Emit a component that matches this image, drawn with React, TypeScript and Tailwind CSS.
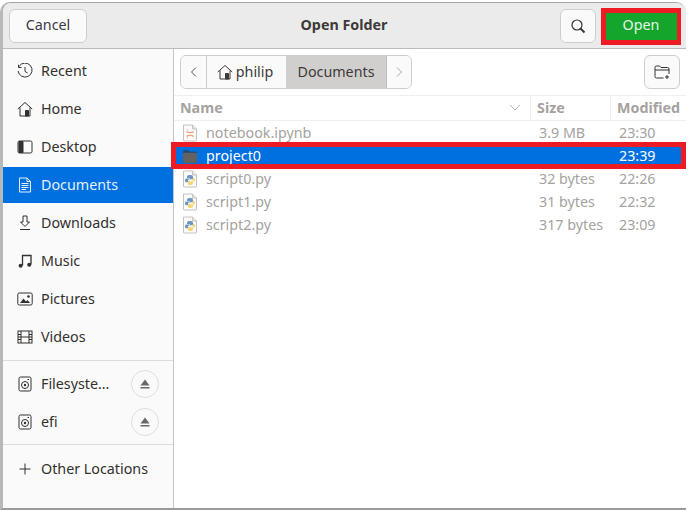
import React from "react";

const S = ({ children, size = 16, className = "" }: { children: React.ReactNode; size?: number; className?: string }) => (
  <svg width={size} height={size} viewBox="0 0 16 16" fill="none" stroke="currentColor" strokeWidth="1" className={"shrink-0 " + className}>
    {children}
  </svg>
);

const Recent = () => (
  <S>
    <path d="M2.2 3.2A7 7 0 1 1 1.1 8" />
    <path d="M1.5 1.8V4.5H4.5" />
    <path d="M8 4v4.4l2.6 1.6" />
  </S>
);
const Home = () => (
  <S>
    <path d="M0.8 8 8 1.5 15.2 8" />
    <path d="M3 6.5V15H13V6.5" />
    <path d="M8.5 9.5h3V15h-3z" fill="currentColor" />
  </S>
);
const Desktop = () => (
  <S>
    <rect x="1" y="2" width="14" height="12" rx="1.5" />
    <path d="M2 2.5h4v11H2z" fill="currentColor" />
  </S>
);
const Doc = () => (
  <S>
    <path d="M2.5 1h7.5l3.5 3.5V15h-11z" strokeLinejoin="round" />
    <path d="M10 1v3.5h3.5M4.5 6.5h7M4.5 8.5h7M4.5 10.5h7M4.5 12.5h4.5" />
  </S>
);
const Download = () => (
  <S>
    <path d="M6 1h4v6h2.5L8 11.5 3.5 7H6z" />
    <path d="M3 14.5h10" />
  </S>
);
const Music = () => (
  <S>
    <path d="M5.5 12.5V2.5h8.5v9" strokeWidth="1.3" />
    <circle cx="3.6" cy="12.8" r="2" fill="currentColor" stroke="none" />
    <circle cx="12.2" cy="11.8" r="2" fill="currentColor" stroke="none" />
  </S>
);
const Pictures = () => (
  <S>
    <rect x="0.8" y="2" width="14.4" height="12" rx="1.5" />
    <path d="M3 12l3.5-4.5 2.5 3 1.5-1.5 2.5 3z" fill="currentColor" stroke="none" />
    <circle cx="11.5" cy="5.5" r="1.3" fill="currentColor" stroke="none" />
  </S>
);
const Video = () => (
  <S>
    <rect x="1" y="2" width="14" height="12" />
    <path d="M4 2v12M12 2v12M1 5.5h3M1 8h3M1 10.5h3M12 5.5h3M12 8h3M12 10.5h3M4 8h8" />
  </S>
);
const Disk = () => (
  <S>
    <rect x="2" y="1" width="12" height="14" rx="1.5" />
    <circle cx="8" cy="9" r="3.5" />
    <circle cx="8" cy="9" r="1.2" fill="currentColor" stroke="none" />
    <path d="M10.5 3.5h1.5" />
  </S>
);
const Plus = () => (
  <S>
    <path d="M8 2.5v11M2.5 8h11" />
  </S>
);

const PageIcon = ({ children }: { children: React.ReactNode }) => (
  <svg width="16" height="18" viewBox="0 0 16 18" className="shrink-0">
    <path d="M1.5 1h9l4 4v11.5a.5.5 0 0 1-.5.5H2a.5.5 0 0 1-.5-.5z" fill="#fbfbfb" stroke="#c4c2bf" />
    <path d="M10.5 1v4h4" fill="#e8e6e3" stroke="#c4c2bf" />
    {children}
  </svg>
);
const Py = () => (
  <PageIcon>
    <path d="M8 5c-2 0-3 .6-3 2v1h3v.6H4.400C3.400 8.600 3 9.400 3 10.500s.5 1.800 1.500 1.800H6v-1.300c0-1 .8-1.700 1.800-1.700h2c.8 0 1.200-.5 1.200-1.300V7c0-1.400-1.200-2-3-2z" fill="#6d97c0" />
    <path d="M8 15c2 0 3-.6 3-2v-1H8v-.6h3.600c1 0 1.400-.8 1.400-1.900s-.5-1.800-1.500-1.800H11v1.300c0 1-.8 1.700-1.800 1.700h-2C6.400 10.700 6 11.200 6 12v1c0 1.400.2 2 2 2z" fill="#f3d674" />
  </PageIcon>
);
const Ipynb = () => (
  <PageIcon>
    <path d="M4.500 7.500c1.200 1.500 5.800 1.500 7 0M4.500 12.500c1.200-1.500 5.800-1.500 7 0" stroke="#f0a27c" strokeWidth="1.400" fill="none" />
    <path d="M5 5.800h1M5 14h1" stroke="#f0a27c" />
  </PageIcon>
);
const Folder = () => (
  <svg width="16" height="16" viewBox="0 0 16 16" className="shrink-0">
    <path d="M1 3.500A1.500 1.500 0 0 1 2.500 2h3.500l1.500 1.500H13.500A1.500 1.500 0 0 1 15 5v8.500a1.500 1.500 0 0 1-1.500 1.500h-11A1.500 1.500 0 0 1 1 13.500z" fill="#1f4a78" />
    <path d="M1 5.800a1 1 0 0 1 1-1h12a1 1 0 0 1 1 1v7.700a1.500 1.500 0 0 1-1.500 1.500h-11A1.500 1.500 0 0 1 1 13.500z" fill="#646260" />
  </svg>
);

const Eject = () => (
  <span className="w-[28px] h-[28px] rounded-full border border-[#e0dedb] flex items-center justify-center">
    <svg width="12" height="12" viewBox="0 0 12 12">
      <path d="M6 1.500l4.500 6h-9z" fill="#6a6866" />
      <path d="M1.500 9h9v1.500h-9z" fill="#6a6866" />
    </svg>
  </span>
);

const Place = ({ icon, label, active, h = "h-[38px]", right }: { icon: React.ReactNode; label: string; active?: boolean; h?: string; right?: React.ReactNode }) => (
  <div className={`${h} flex items-center pl-[14px] gap-[8px] pr-[14px] ${active ? "bg-[#0070e0] text-[#e4effb]" : "text-[#33302e]"}`}>
    <span className="flex w-[16px] justify-center">{icon}</span>
    <span className="flex-1 whitespace-nowrap">{label}</span>
    {right}
  </div>
);

const Row = ({ icon, name, size, time, sel }: { icon: React.ReactNode; name: string; size: string; time: string; sel?: boolean }) => (
  <div className={`h-[23px] flex items-center ${sel ? "bg-[#0070e0] text-white" : "text-[#a5a2a0]"}`}>
    <div className="w-[362px] flex items-center pl-[6px] gap-[8px]">
      {icon}
      <span>{name}</span>
    </div>
    <div className="w-[81px] pl-[1px]">{size}</div>
    <div>{time}</div>
  </div>
);

export default function App() {
  return (
    <div className="relative w-[690px] h-[510px] bg-white overflow-hidden text-[14.3px]" style={{ fontFamily: '"Noto Sans", sans-serif' }}>
      <div className="mt-[2px] w-[686px] h-[508px] flex flex-col rounded-t-[10px] border-l-[3px] border-t border-b-2 border-l-[#b8b8b8] border-t-[#a8a6a4] border-b-[#9a9a9a] overflow-hidden bg-[#fafafa]">
        <header className="h-[46px] shrink-0 flex items-center bg-[#ebebeb] border-b border-[#bdbbb9] pl-[6px] pr-[6px]">
          <button className="w-[78px] h-[34px] pb-[2px] rounded-[6px] bg-[#fafafa] border border-[#cfcdcb] text-[#3d3846]">Cancel</button>
          <div className="flex-1 text-center font-bold text-[#3d3a38] pl-[41px] pb-[2px]">Open Folder</div>
          <button className="w-[36px] h-[34px] rounded-[6px] bg-[#fafafa] border border-[#cfcdcb] flex items-center justify-center text-[#33302e] mr-[9px]">
            <svg width="16" height="16" viewBox="0 0 16 16" fill="none" stroke="currentColor" strokeWidth="1.200">
              <circle cx="7" cy="7" r="5" />
              <path d="M10.500 10.500l4 4" strokeWidth="1.800" />
            </svg>
          </button>
          <button className="w-[72px] h-[28px] pb-[2px] bg-[#14a52c] text-[#e6f6e8] mr-[3px]">Open</button>
        </header>
        <div className="flex flex-1 min-h-0">
          <aside className="w-[171px] shrink-0 border-r border-[#c8c6c4] pt-[3px] bg-[#fafafa]">
            <Place icon={<Recent />} label="Recent" />
            <Place icon={<Home />} label="Home" />
            <Place icon={<Desktop />} label="Desktop" />
            <Place icon={<Doc />} label="Documents" active h="h-[36px] my-px" />
            <Place icon={<Download />} label="Downloads" />
            <Place icon={<Music />} label="Music" />
            <Place icon={<Pictures />} label="Pictures" />
            <Place icon={<Video />} label="Videos" />
            <div className="h-px bg-[#dedcda] mt-[4px] mb-[4px]" />
            <Place icon={<Disk />} label="Filesyste…" right={<Eject />} />
            <Place icon={<Disk />} label="efi" right={<Eject />} />
            <div className="h-px bg-[#dedcda] mt-[3px] mb-[5px]" />
            <Place icon={<Plus />} label="Other Locations" />
          </aside>
          <main className="flex-1 min-w-0 bg-white flex flex-col">
            <div className="h-[47px] shrink-0 flex items-center pl-[6px] pr-[6px] border-b border-[#f0efee]">
              <div className="h-[34px] flex items-stretch rounded-[6px] border border-[#cfcdcb] overflow-hidden text-[#3d3a38]">
                <div className="w-[26px] bg-[#fafafa] border-r border-[#cfcdcb] flex items-center justify-center">
                  <svg width="10" height="12" viewBox="0 0 10 12" fill="none" stroke="#55524f"><path d="M7 1.500 2.500 6 7 10.500" /></svg>
                </div>
                <div className="w-[79px] bg-[#fafafa] flex items-center justify-center gap-[3px] pb-[1px] pr-[3px]">
                  <Home />
                  <span>philip</span>
                </div>
                <div className="w-[101px] bg-[#d0cfcd] flex items-center justify-center pb-[1px] border-r border-[#c0bebc]">Documents</div>
                <div className="w-[24px] bg-[#fafafa] flex items-center justify-center">
                  <svg width="10" height="12" viewBox="0 0 10 12" fill="none" stroke="#a8a6a4"><path d="M3 1.500 7.500 6 3 10.500" /></svg>
                </div>
              </div>
              <div className="flex-1" />
              <button className="w-[36px] h-[34px] rounded-[6px] bg-[#fafafa] border border-[#cfcdcb] flex items-center justify-center text-[#33302e]">
                <svg width="16" height="16" viewBox="0 0 16 16" fill="none" stroke="currentColor">
                  <path d="M9.500 14H2.500A1.500 1.500 0 0 1 1 12.500v-9A1.500 1.500 0 0 1 2.500 2H5.500L7 3.500h6.500A1.500 1.500 0 0 1 15 5v5" />
                  <path d="M1 6h14M13 11v4M11 13h4" />
                </svg>
              </button>
            </div>
            <div className="h-[25px] shrink-0 flex items-center border-b border-[#f0efee] font-bold text-[#a5a2a0]">
              <div className="w-[357px] pl-[6px] flex items-center justify-between pr-[9px] border-r border-[#f0efee] h-full">
                <span>Name</span>
                <svg width="12" height="8" viewBox="0 0 12 8" fill="none" stroke="#b5b3b1"><path d="M1 1l5 5 5-5" /></svg>
              </div>
              <div className="w-[80px] pl-[6px] h-full flex items-center border-r border-[#f0efee]">Size</div>
              <div className="pl-[6px]">Modified</div>
            </div>
            <div className="ml-[2px] mr-[2px]">
              <Row icon={<Ipynb />} name="notebook.ipynb" size="3.9 MB" time="23:30" />
              <Row icon={<Folder />} name="project0" size="" time="23:39" sel />
              <Row icon={<Py />} name="script0.py" size="32 bytes" time="22:26" />
              <Row icon={<Py />} name="script1.py" size="31 bytes" time="22:32" />
              <Row icon={<Py />} name="script2.py" size="317 bytes" time="23:09" />
            </div>
          </main>
        </div>
      </div>
      <div className="absolute left-[601px] top-[8px] w-[80px] h-[37px] border-[5px] border-r-4 border-[#ed1c24]" />
      <div className="absolute left-[171px] top-[142px] w-[515px] h-[27px] border-[5px] border-[#ed1c24]" />
    </div>
  );
}
